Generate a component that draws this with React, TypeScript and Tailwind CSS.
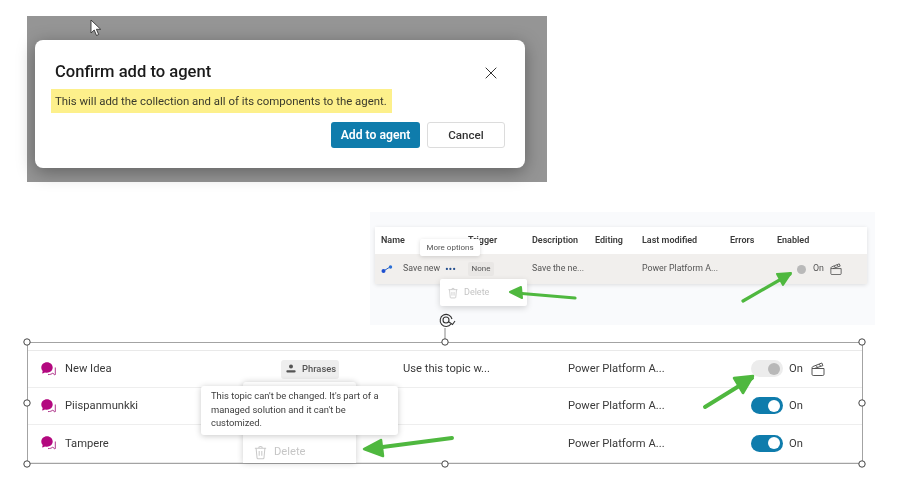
import React from "react";

const TopicIcon = () => (
  <svg width="15" height="14" viewBox="0 0 15 14" fill="none">
    <path d="M7 12.600c2.300 0 3.800-.6 4.800-1.600l1.700 1.900c.3.300.8.100.8-.3V5.500" stroke="#a6207f" strokeWidth="0.9" />
    <path d="M6 0.300C2.800 0.300 0.300 2.600 0.300 5.500c0 1.400.6 2.600 1.400 3.500l-.5 2c-.1.300.2.500.5.400l2.300-1c.6.200 1.300.3 2 .3 3.200 0 5.700-2.300 5.700-5.200S9.200.3 6 .3z" fill="#b3087f" />
  </svg>
);

const Trash = ({ size, color }: { size: number; color: string }) => (
  <svg width={size} height={size} viewBox="0 0 16 16" fill="none" stroke={color} strokeWidth="1.1">
    <path d="M2 3.500h12M6 3.500c0-2.400 4-2.400 4 0M3.300 3.500l1 10.200c.1.600.5.900 1 .9h5.400c.5 0 .9-.3 1-.9l1-10.200M6.600 6.500v5M9.400 6.500v5" />
  </svg>
);

const Clapper = ({ size }: { size: number }) => (
  <svg width={size} height={size} viewBox="0 0 14 14" fill="none" stroke="#444" strokeWidth="0.9">
    <path d="M1 6.500h12v5.800c0 .7-.5 1.200-1.200 1.200H2.200c-.7 0-1.200-.5-1.200-1.200z" />
    <path d="M1 6.500c0-1.300.4-1.700 1-2L10.800 1l1.100 2.600L3.400 6.500M4.800 3.300l1.600 1.900M8 2.100l1.600 1.900" />
  </svg>
);

const Person = () => (
  <svg width="10" height="10" viewBox="0 0 10 10" fill="#555">
    <circle cx="5" cy="2.600" r="2" />
    <path d="M1.200 6.200h7.600c.5 0 .8.400.8.900v.5c0 .6-.5.900-1 .9H1.300c-.5 0-.9-.3-.9-.9v-.5c0-.5.3-.9.8-.9z" />
  </svg>
);

const Switch = () => (
  <div className="flex h-[17px] w-[32px] items-center justify-end rounded-full bg-[#0f7cac] pr-[3px]">
    <div className="h-[12px] w-[12px] rounded-full bg-white" />
  </div>
);

const rows = ["New Idea", "Piispanmunkki", "Tampere"];

export default function App() {
  return (
    <div
      className="relative h-[485px] w-[903px] overflow-hidden bg-white text-[#2b2b2b]"
      style={{ fontFamily: 'Roboto, "Noto Sans", sans-serif' }}
    >
      {/* Dialog screenshot */}
      <section className="absolute left-[27px] top-[16px] flex h-[166px] w-[520px] items-start justify-start bg-[#959595] pl-[8px] pt-[24px] blur-[0.3px]">
        <div className="flex h-[128px] w-[490px] flex-col rounded-[8px] bg-white pl-[16px] pr-[20px] shadow-[0_4px_18px_rgba(0,0,0,0.35)]">
          <div className="flex h-[49px] items-center justify-between pl-[4px] pr-[8px] pt-[16px]">
            <h2 className="text-[16.600px] font-medium text-[#1b1b1b]">Confirm add to agent</h2>
            <svg width="12" height="12" viewBox="0 0 12 12" stroke="#333" strokeWidth="1">
              <path d="M.7.7l10.600 10.600M11.300.7.700 11.300" />
            </svg>
          </div>
          <div className="flex h-[24px] w-[341px] items-center whitespace-nowrap bg-[#fdf08b] pl-[4px] pt-[1px] text-[11.400px] text-[#3a3a2c]">
            This will add the collection and all of its components to the agent.
          </div>
          <div className="mt-[9px] flex justify-end gap-[7px]">
            <div className="flex h-[26px] w-[89px] items-center justify-center rounded-[3px] bg-[#0f7cac] pt-[1px] text-[12.200px] font-semibold text-white">
              Add to agent
            </div>
            <div className="flex h-[26px] w-[78px] items-center justify-center rounded-[3px] border border-[#dcdcdc] bg-white pt-[1px] text-[11.600px] font-medium text-[#333]">
              Cancel
            </div>
          </div>
        </div>
      </section>

      {/* Cursor */}
      <svg className="absolute left-[90px] top-[19px]" width="13" height="18" viewBox="0 0 13 18">
        <path d="M1 1v13l3.200-3 2.300 5.500 2.200-1-2.300-5.200h4.300z" fill="#fff" stroke="#333" strokeWidth="0.9" />
      </svg>

      {/* Small table screenshot */}
      <section className="absolute left-[370px] top-[212px] h-[113px] w-[505px] bg-[#f9fafc] pl-[5px] pr-[8px] pt-[15px] blur-[0.4px]">
        <div className="relative rounded-[2px] shadow-[0_1px_4px_rgba(0,0,0,0.12)]">
          <div className="grid h-[27px] grid-cols-[87px_64px_63px_47px_88px_47px_1fr] items-center bg-white pl-[6px] pt-[1px] text-[9px] font-semibold text-[#3a3a3a]">
            <span>Name</span>
            <span>Trigger</span>
            <span>Description</span>
            <span>Editing</span>
            <span>Last modified</span>
            <span>Errors</span>
            <span>Enabled</span>
          </div>
          <div className="grid h-[30px] grid-cols-[87px_64px_63px_47px_88px_47px_1fr] items-center bg-[#f1efed] pl-[6px] text-[8.800px] text-[#555]">
            <div className="flex items-center">
              <svg width="12" height="8" viewBox="0 0 12 8" className="mr-[10px]">
                <path d="M2.500 6 9 2" stroke="#2563c9" strokeWidth="1" />
                <circle cx="2.500" cy="6" r="2" fill="#1d4fd0" />
                <circle cx="9.500" cy="2" r="1.700" fill="#2a6fd6" />
              </svg>
              <span>Save new</span>
              <span className="ml-[5px] text-[9px] font-bold leading-none tracking-[0.4px] text-[#27508f]">•••</span>
            </div>
            <span className="flex h-[14px] w-[26px] items-center justify-center rounded-[2px] bg-[#e9e7e5] text-[8px]">None</span>
            <span>Save the ne...</span>
            <span />
            <span>Power Platform A...</span>
            <span />
            <div className="flex items-center pl-[20px]">
              <div className="h-[9px] w-[9px] rounded-full bg-[#b9b9b9]" />
              <span className="ml-[7px]">On</span>
              <span className="ml-[6px]"><Clapper size={12} /></span>
            </div>
          </div>
          <div className="absolute left-[45px] top-[12px] flex h-[17px] w-[60px] items-center justify-center rounded-[2px] bg-white text-[8px] text-[#555] shadow-[0_1px_4px_rgba(0,0,0,0.15)]">
            More options
          </div>
          <div className="absolute left-[65px] top-[52px] flex h-[27px] w-[87px] items-center gap-[5px] rounded-[2px] bg-white pl-[7px] text-[9px] text-[#c4c4c4] shadow-[0_2px_6px_rgba(0,0,0,0.16)]">
            <Trash size={12} color="#c8c8c8" />
            Delete
          </div>
        </div>
      </section>

      {/* Selected main table */}
      <section className="absolute left-[27px] top-[342px] h-[122px] w-[836px] border border-[#a3a3a3] pt-[7px] blur-[0.25px]">
        <div className="border-b border-t border-[#e9e9e9]">
          {rows.map((name, i) => (
            <div
              key={name}
              className={`flex h-[37px] items-center text-[11.200px] text-[#3a3a3a] ${i < 2 ? "border-b border-[#eeeeee]" : ""}`}
            >
              <div className="flex w-[253px] items-center gap-[9px] pl-[13px]">
                <TopicIcon />
                <span className="pt-[1px]">{name}</span>
              </div>
              <div className="w-[122px]">
                {i === 0 && (
                  <div className="flex h-[19px] w-[58px] items-center gap-[6px] rounded-[3px] bg-[#eeeeee] pl-[5px] text-[9.400px] font-medium text-[#555]">
                    <Person />
                    Phrases
                  </div>
                )}
              </div>
              <div className="w-[165px] pt-[1px]">{i === 0 ? "Use this topic w..." : ""}</div>
              <div className="w-[183px] pt-[1px]">Power Platform A...</div>
              <div className="flex items-center">
                {i === 0 ? (
                  <div className="flex h-[17px] w-[32px] items-center justify-end rounded-full bg-[#ececec] pr-[3px]">
                    <div className="h-[12px] w-[12px] rounded-full bg-[#b8b8b8]" />
                  </div>
                ) : (
                  <Switch />
                )}
                <span className="ml-[6px] pt-[1px]">On</span>
                {i === 0 && <span className="ml-[8px]"><Clapper size={14} /></span>}
              </div>
            </div>
          ))}
        </div>

        {/* Menu behind the tooltip */}
        <div className="absolute left-[215px] top-[39px] flex h-[81px] w-[113px] items-end rounded-t-[3px] bg-white pb-[2px] pl-[10px] shadow-[0_0_6px_rgba(0,0,0,0.2)]">
          <div className="flex items-center gap-[6px] text-[11.200px] text-[#c6c6c6]">
            <Trash size={15} color="#c9c9c9" />
            Delete
          </div>
        </div>

        {/* Tooltip */}
        <div className="absolute left-[173px] top-[43px] h-[49px] w-[197px] rounded-[3px] bg-white px-[10px] py-[3px] text-[9.400px] leading-[13.500px] text-[#3c3c3c] shadow-[0_1px_6px_rgba(0,0,0,0.22)]">
          This topic can't be changed. It's part of a managed solution and it can't be customized.
        </div>
      </section>

      {/* Selection handles, rotation handle and arrows are drawn on the canvas */}
      <svg className="pointer-events-none absolute left-0 top-0" width="903" height="485" viewBox="0 0 903 485" fill="none">
        <path d="M445 328v14" stroke="#888" strokeWidth="1" />
        {[
          [27, 342], [445, 342], [862, 342],
          [27, 403], [862, 403],
          [27, 464], [445, 464], [862, 464],
        ].map(([x, y]) => (
          <circle key={`${x}-${y}`} cx={x} cy={y} r="3.200" fill="#fff" stroke="#444" strokeWidth="1" />
        ))}
        <g stroke="#333" strokeWidth="1.100">
          <path d="M451 324a6 6 0 1 1 1-5" />
          <circle cx="446" cy="320" r="3" />
          <path d="M449 322l3.500 2.500 2.500-3.500" />
        </g>
        <g stroke="#4fb83f" strokeLinecap="round" strokeLinejoin="round">
          <path d="M575 298 L516 293" strokeWidth="3.200" />
          <path d="M521 287 L510 292 L522 298 Z" fill="#4fb83f" strokeWidth="2" />
          <path d="M743 301 L790 274" strokeWidth="3.200" />
          <path d="M777 274 L791 273 L783 285 Z" fill="#4fb83f" strokeWidth="2" />
          <path d="M705 407 L752 378" strokeWidth="4" />
          <path d="M734 378 L753 376 L743 393 Z" fill="#4fb83f" strokeWidth="2.500" />
          <path d="M452 438 L375 448" strokeWidth="4" />
          <path d="M381 440 L364 449 L383 456 Z" fill="#4fb83f" strokeWidth="2.500" />
        </g>
      </svg>
    </div>
  );
}
